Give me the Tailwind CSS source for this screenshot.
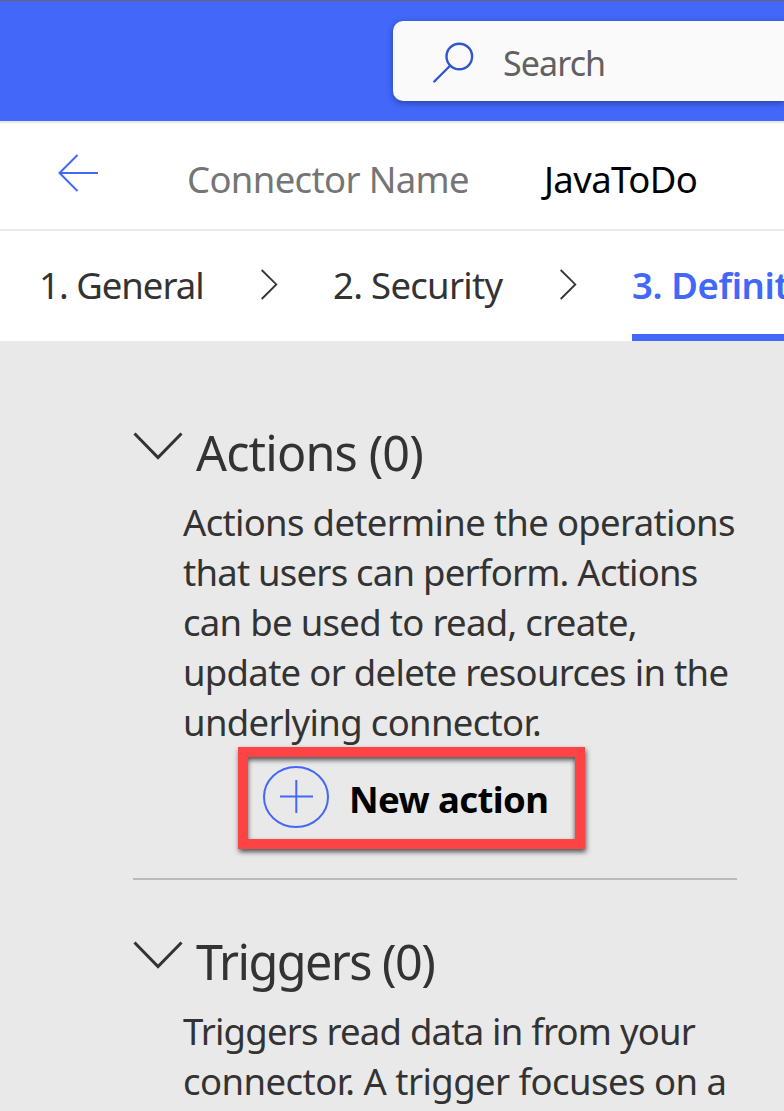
<!DOCTYPE html>
<html lang="en">
<head>
<meta charset="utf-8">
<title>Connector</title>
<script src="https://cdn.jsdelivr.net/npm/@tailwindcss/browser@4"></script>
</head>
<body class="h-[1111px] w-[784px] overflow-hidden bg-[#e9e9e9] font-['Noto_Sans',sans-serif] text-[36.5px] leading-[50px] text-[#333333] whitespace-nowrap">
<header class="flex h-[121px] overflow-hidden border-t-[1px] border-[#666666] bg-[#4267f9] pt-5 pl-[393px]">
  <div class="flex h-20 flex-1 items-center rounded-l-[10px] bg-[#fafafa] pl-10 text-[34px] text-[#616161] shadow-[0_2px_6px_rgba(0,0,0,0.35)]">
    <svg class="mt-1 h-[42px] w-[42px] shrink-0" viewBox="0 0 42 42" fill="none" stroke="#3355cc" stroke-width="2.4" stroke-linecap="round"><circle cx="26.3" cy="14.5" r="12.8"/><path d="M17.3 23.5 1.3 39.5"/></svg>
    <span class="ml-[28px] mt-[4px] tracking-[-0.9px]">Search</span>
  </div>
</header>
<div class="flex h-[110px] border-y-2 border-[#e9e9e9] bg-white pl-[58px]">
  <svg class="mt-[31px] h-[38px] w-[42px] shrink-0" viewBox="0 0 42 38" fill="none" stroke="#4267f9" stroke-width="2"><path d="M40 19H1.5M19.5 1 1.5 19l18 18"/></svg>
  <span class="mt-[31px] ml-[87px] w-[357px] tracking-[-0.65px] text-[#757575]">Connector Name</span>
  <span class="mt-[31px] tracking-[-0.6px] text-black">JavaToDo</span>
</div>
<nav class="flex h-[110px] bg-white pl-[39px]">
  <span class="mt-[29px] w-[221px] shrink-0 tracking-[-1px]">1. General</span>
  <svg class="mt-[37px] h-[32px] w-[18px] shrink-0" viewBox="0 0 18 32" fill="none" stroke="#333" stroke-width="1.8"><path d="m1.7 2 14.6 14.4L1.7 31"/></svg>
  <span class="mt-[29px] ml-[55px] w-[226px] shrink-0 tracking-[-0.7px]">2. Security</span>
  <svg class="mt-[37px] h-[32px] w-[18px] shrink-0" viewBox="0 0 18 32" fill="none" stroke="#333" stroke-width="1.8"><path d="m1.7 2 14.6 14.4L1.7 31"/></svg>
  <span class="ml-[55px] min-w-0 flex-1 overflow-hidden border-b-[7px] border-[#4267f9] pt-[29px] font-semibold tracking-[-0.4px] text-[#4267f9]">3. Definition</span>
</nav>
<main class="pl-[133px]">
  <section class="h-[539px] w-[604px] border-b-2 border-[#bababa] pt-[78px]">
    <div class="flex h-[78px]">
      <svg class="mt-[12px] h-[30px] w-[50px] shrink-0" viewBox="0 0 50 30" fill="none" stroke="#333" stroke-width="3"><path d="m1.5 2.5 23.5 24 23.5-24"/></svg>
      <h2 class="ml-[13px] text-[48.5px] leading-[66px] tracking-[-0.85px]">Actions (0)</h2>
    </div>
    <p class="flex flex-col items-start pl-[50px]">
      <span class="tracking-[-0.68px]">Actions determine the operations</span>
      <span class="tracking-[-0.77px]">that users can perform. Actions</span>
      <span class="tracking-[-0.7px]">can be used to read, create,</span>
      <span class="tracking-[-0.7px]">update or delete resources in the</span>
      <span class="tracking-[-0.67px]">underlying connector.</span>
    </p>
    <button class="relative ml-[105px] flex h-[102px] w-[347px] border-10 border-[#fd4343] pl-[15px] text-black shadow-[1px_3px_5px_rgba(0,0,0,0.65),inset_0_3px_5px_rgba(0,0,0,0.65)]">
      <svg class="mt-[9px] h-[62px] w-[66px] shrink-0" viewBox="0 0 66 62" fill="none" stroke="#4267f9" stroke-width="2"><ellipse cx="33" cy="31" rx="32" ry="30"/><path d="M33.3 14v33M17 30.5h33"/></svg>
      <span class="ml-[20px] mt-[17px] font-bold tracking-[-0.6px]">New action</span>
    </button>
  </section>
  <section class="pt-[48px]">
    <div class="flex h-[78px]">
      <svg class="mt-[12px] h-[30px] w-[50px] shrink-0" viewBox="0 0 50 30" fill="none" stroke="#333" stroke-width="3"><path d="m1.5 2.5 23.5 24 23.5-24"/></svg>
      <h2 class="ml-[13px] text-[48.5px] leading-[66px] tracking-[-1.55px]">Triggers (0)</h2>
    </div>
    <p class="flex flex-col items-start pl-[50px]">
      <span class="tracking-[-0.78px]">Triggers read data in from your</span>
      <span class="tracking-[-0.55px]">connector. A trigger focuses on a</span>
    </p>
  </section>
</main>
</body>
</html>
